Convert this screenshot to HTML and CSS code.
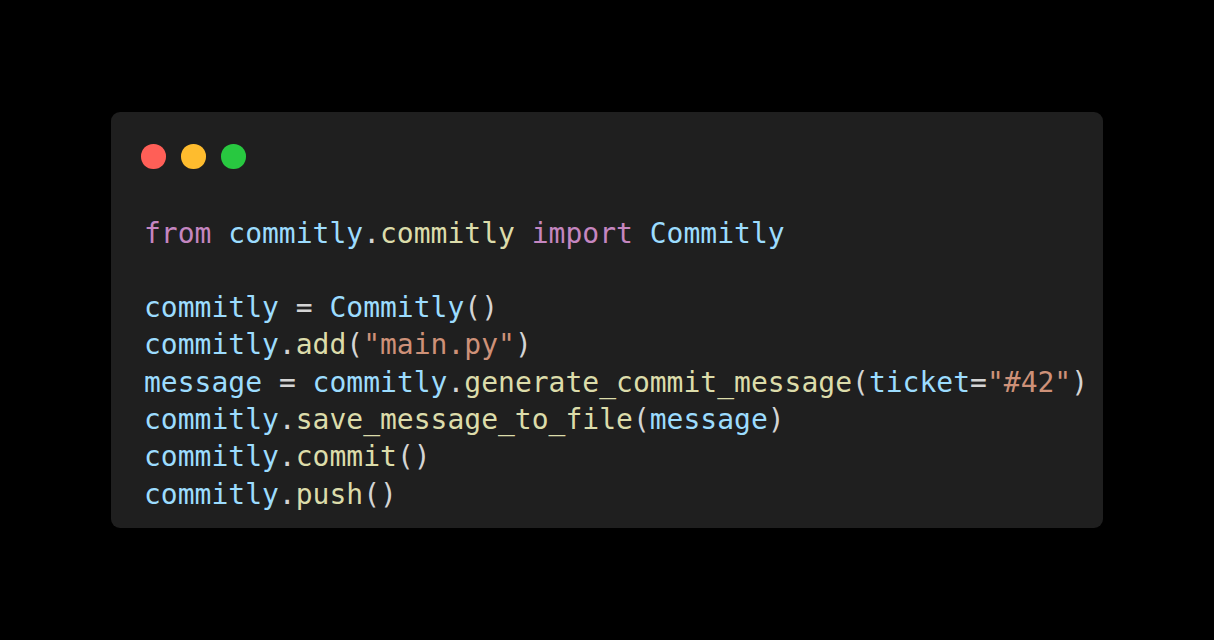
FILE: index.html
```html
<!DOCTYPE html>
<html lang="en">
<head>
<meta charset="utf-8">
<title>Commitly</title>
<link rel="stylesheet" href="styles.css">
</head>
<body>
<main class="stage">
  <section class="window">
    <div class="dots">
      <span class="dot dot-red"></span>
      <span class="dot dot-yellow"></span>
      <span class="dot dot-green"></span>
    </div>
<pre class="code"><code><span class="kw">from</span> <span class="var">commitly</span><span class="pun">.</span><span class="fn">commitly</span> <span class="kw">import</span> <span class="var">Commitly</span>

<span class="var">commitly</span> <span class="pun">=</span> <span class="var">Commitly</span><span class="pun">()</span>
<span class="var">commitly</span><span class="pun">.</span><span class="fn">add</span><span class="pun">(</span><span class="str">"main.py"</span><span class="pun">)</span>
<span class="var">message</span> <span class="pun">=</span> <span class="var">commitly</span><span class="pun">.</span><span class="fn">generate_commit_message</span><span class="pun">(</span><span class="var">ticket</span><span class="pun">=</span><span class="str">"#42"</span><span class="pun">)</span>
<span class="var">commitly</span><span class="pun">.</span><span class="fn">save_message_to_file</span><span class="pun">(</span><span class="var">message</span><span class="pun">)</span>
<span class="var">commitly</span><span class="pun">.</span><span class="fn">commit</span><span class="pun">()</span>
<span class="var">commitly</span><span class="pun">.</span><span class="fn">push</span><span class="pun">()</span></code></pre>
  </section>
</main>
</body>
</html>
```

FILE: styles.css
```css
html, body {
  margin: 0;
  padding: 0;
  background: #000000;
}

.stage {
  width: 1214px;
  height: 640px;
  display: flex;
  align-items: center;
  justify-content: center;
}

.window {
  box-sizing: border-box;
  width: 992px;
  height: 416px;
  background: #1f1f1f;
  border-radius: 9px;
  padding: 32px 33px 0 30px;
}

.dots {
  display: flex;
  gap: 15.5px;
  height: 24.5px;
}

.dot {
  width: 24.5px;
  height: 24.5px;
  border-radius: 50%;
}

.dot-red { background: #ff5f57; }
.dot-yellow { background: #febc2e; }
.dot-green { background: #28c840; }

.code {
  margin: 46px 0 0 3px;
  font-family: "DejaVu Sans Mono", monospace;
  font-size: 28px;
  line-height: 37.3px;
  color: #d4d4d4;
  white-space: pre;
}

.kw { color: #c586c0; }
.var { color: #9cdcfe; }
.fn { color: #dcdcaa; }
.str { color: #ce9178; }
.pun { color: #d4d4d4; }
```
